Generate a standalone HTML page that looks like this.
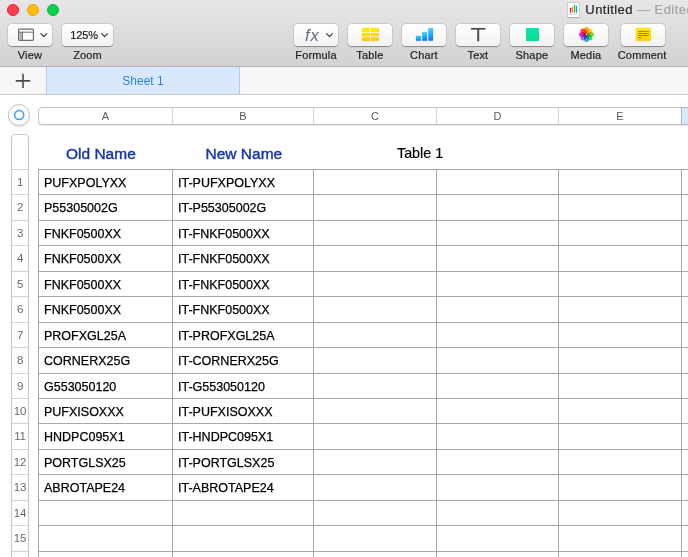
<!DOCTYPE html><html><head><meta charset="utf-8"><title>Untitled</title><style>
*{box-sizing:border-box;margin:0;padding:0}
html,body{width:688px;height:557px;overflow:hidden;background:#fff;font-family:"Liberation Sans",sans-serif;}
#root{position:relative;width:688px;height:557px;overflow:hidden;background:#fff}
.abs{position:absolute}
#toolbar{left:0;top:0;width:688px;height:67px;background:linear-gradient(#e8e6e8,#d3d1d3);border-bottom:1px solid #b3b1b3}
.tl{position:absolute;top:4px;width:12px;height:12px;border-radius:50%}
.btn{position:absolute;top:23.5px;height:22.5px;border-radius:4px;background:linear-gradient(#ffffff,#f3f2f3);box-shadow:0 0.5px 1px rgba(0,0,0,.35),0 0 0 0.5px rgba(0,0,0,.12)}
.lbl{position:absolute;top:47.7px;width:80px;text-align:center;font-size:11px;line-height:14px;color:#1e1e1e;letter-spacing:0.15px;-webkit-text-stroke:0.2px #1e1e1e}
#tabbar{left:0;top:67px;width:688px;height:28px;background:#f6f6f6;border-bottom:1px solid #c9c9c9}
#tab{left:46px;top:67px;width:194px;height:27px;background:#d8e8fd;border-left:1px solid #b6c9e6;border-right:1px solid #b6c9e6;color:#2f7fe6;font-size:12px;line-height:27px;padding-top:1px;text-align:center}
.colhdr{top:107px;height:18px;left:38px;width:660px;border:1px solid #c4c4c4;border-radius:4px;background:#fff;box-shadow:0 1px 1px rgba(0,0,0,.10)}
.cl{position:absolute;top:107px;height:18px;line-height:18px;font-size:11px;color:#5a5a5a;text-align:center;padding-left:1px}
.cs{position:absolute;top:108px;height:16px;width:1px;background:#d4d4d4}
.rowhdr{left:11px;top:134px;width:18px;height:440px;border:1px solid #c6c6c6;border-radius:4px;background:#fff}
.rn{position:absolute;left:12px;width:16px;text-align:center;font-size:11.5px;color:#6a6a6a;line-height:14px;letter-spacing:-0.2px}
.rs{position:absolute;left:12px;width:16px;height:1px;background:#d2d2d2}
.hl{position:absolute;left:38px;width:650px;height:1px;background:#a6a6a6}
.vl{position:absolute;top:169px;width:1px;height:400px;background:#a6a6a6}
.ct{position:absolute;font-size:12.5px;line-height:16px;color:#000;white-space:nowrap;-webkit-text-stroke:0.25px #000}
.hd{position:absolute;font-size:15.5px;color:#1434ac;-webkit-text-stroke:0.4px #1434ac;letter-spacing:0px;white-space:nowrap;line-height:18px}
.ico{position:absolute;overflow:visible}
</style></head><body><div id="root"><div id="lay" style="position:absolute;left:0;top:0;width:688px;height:557px;will-change:transform">
<div id="toolbar" class="abs"></div>
<div class="tl" style="left:7px;background:#ff3f4e;border:0.5px solid #f01c30"></div>
<div class="tl" style="left:27px;background:#ffbe0c;border:0.5px solid #e9a204"></div>
<div class="tl" style="left:47px;background:#04d04c;border:0.5px solid #12b93a"></div>
<div class="btn" style="left:7.75px;width:44.25px"></div>
<div class="lbl" style="left:-10.125px">View</div>
<div class="btn" style="left:61.9px;width:51.2px"></div>
<div class="lbl" style="left:47.5px">Zoom</div>
<div class="btn" style="left:293.9px;width:44.3px"></div>
<div class="lbl" style="left:276.04999999999995px">Formula</div>
<div class="btn" style="left:347.75px;width:44.3px"></div>
<div class="lbl" style="left:329.9px">Table</div>
<div class="btn" style="left:401.75px;width:44.3px"></div>
<div class="lbl" style="left:383.9px">Chart</div>
<div class="btn" style="left:455.75px;width:44.3px"></div>
<div class="lbl" style="left:437.9px">Text</div>
<div class="btn" style="left:509.75px;width:44.3px"></div>
<div class="lbl" style="left:491.9px">Shape</div>
<div class="btn" style="left:563.75px;width:44.3px"></div>
<div class="lbl" style="left:545.9px">Media</div>
<div class="btn" style="left:621px;width:44.3px"></div>
<div class="lbl" style="left:602.15px">Comment</div>
<svg class="ico" style="left:18px;top:28px" width="18" height="15" viewBox="0 0 18 15"><g transform="translate(0.000 0.500) scale(1.0000 1.0000)"><rect x="0.6" y="0.6" width="14.8" height="11.3" rx="0.8" fill="#fdfdfd" stroke="#6e6e6e" stroke-width="1.2"/><rect x="1.2" y="4" width="3" height="7.6" fill="#b4b4b4"/><path d="M0.6 3.7H15.4M4.4 3.7V11.8" stroke="#6e6e6e" stroke-width="1" fill="none"/></g></svg>
<svg class="ico" style="left:40px;top:33px" width="9" height="6" viewBox="0 0 9 6"><g transform="translate(0.300 0.200) scale(1.0000 1.0000)"><path d="M0.5 0.4L3.5 3.3L6.5 0.4" stroke="#444" stroke-width="1.2" fill="none" stroke-linecap="round" stroke-linejoin="round"/></g></svg>
<div class="abs" style="left:70.3px;top:27.5px;font-size:11px;line-height:14px;color:#1e1e1e;letter-spacing:-0.1px;-webkit-text-stroke:0.2px #1e1e1e;white-space:nowrap">125%</div>
<svg class="ico" style="left:101px;top:33px" width="9" height="6" viewBox="0 0 9 6"><g transform="translate(0.000 0.200) scale(1.0000 1.0000)"><path d="M0.5 0.4L3.5 3.3L6.5 0.4" stroke="#444" stroke-width="1.2" fill="none" stroke-linecap="round" stroke-linejoin="round"/></g></svg>
<div class="abs" style="left:305px;top:26px;font-size:16.5px;line-height:18px;color:#5d6c82;font-style:italic;white-space:nowrap;letter-spacing:1px;font-family:'Liberation Sans',sans-serif">fx</div>
<svg class="ico" style="left:326px;top:33px" width="9" height="6" viewBox="0 0 9 6"><g transform="translate(0.000 0.200) scale(1.0000 1.0000)"><path d="M0.5 0.4L3.5 3.3L6.5 0.4" stroke="#444" stroke-width="1.2" fill="none" stroke-linecap="round" stroke-linejoin="round"/></g></svg>
<svg class="ico" style="left:362px;top:28px" width="19" height="15" viewBox="0 0 19 15"><g transform="translate(0.000 0.000) scale(1.0000 1.0000)"><defs><linearGradient id="gy" x1="0" y1="0" x2="0" y2="1"><stop offset="0" stop-color="#fff200"/><stop offset="1" stop-color="#fbc800"/></linearGradient></defs><rect x="0.25" y="0.25" width="16.5" height="12.5" rx="0.9" fill="url(#gy)" stroke="#efbc00" stroke-width="0.5"/><path d="M8.5 0V13M0 4.4H17M0 8.7H17" stroke="#fffbd0" stroke-width="0.9" fill="none"/></g></svg>
<svg class="ico" style="left:416px;top:28px" width="19" height="15" viewBox="0 0 19 15"><g transform="translate(0.000 0.000) scale(1.0000 1.0000)"><defs><linearGradient id="gb" x1="0" y1="0" x2="0" y2="1"><stop offset="0" stop-color="#36d4ff"/><stop offset="0.25" stop-color="#2cc4ff"/><stop offset="1" stop-color="#0878ee"/></linearGradient></defs><rect x="0" y="8" width="4.8" height="4.8" rx="0.6" fill="url(#gb)" stroke="#0a84ea" stroke-opacity="0.6" stroke-width="0.4"/><rect x="6.2" y="4.2" width="4.8" height="8.6" rx="0.6" fill="url(#gb)" stroke="#0a84ea" stroke-opacity="0.6" stroke-width="0.4"/><rect x="12.4" y="0.3" width="4.6" height="12.5" rx="0.6" fill="url(#gb)" stroke="#0a84ea" stroke-opacity="0.6" stroke-width="0.4"/></g></svg>
<svg class="ico" style="left:471px;top:28px" width="16" height="15" viewBox="0 0 16 15"><g transform="translate(0.000 0.000) scale(1.0000 1.0000)"><path d="M0 0.8H14.4" stroke="#4a4a4a" stroke-width="1.7" fill="none"/><path d="M7.2 0.8V13.2" stroke="#4a4a4a" stroke-width="2" fill="none"/></g></svg>
<svg class="ico" style="left:526px;top:28px" width="15" height="15" viewBox="0 0 15 15"><g transform="translate(0.000 0.000) scale(1.0000 1.0000)"><defs><linearGradient id="gg" x1="0" y1="0" x2="0" y2="1"><stop offset="0" stop-color="#0be2b4"/><stop offset="1" stop-color="#10dc8a"/></linearGradient></defs><rect width="13" height="13" rx="0.6" fill="url(#gg)"/></g></svg>
<svg class="ico" style="left:578px;top:26px;isolation:isolate" width="18" height="18" viewBox="0 0 18 18"><g transform="translate(8.450 8.500) scale(1.0000 1.0000)"><ellipse cx="0" cy="-4.0" rx="2.5" ry="3.6" fill="#ff8c00" fill-opacity="0.9" style="mix-blend-mode:multiply" transform="rotate(0)"/><ellipse cx="0" cy="-4.0" rx="2.5" ry="3.6" fill="#ffd600" fill-opacity="0.9" style="mix-blend-mode:multiply" transform="rotate(45)"/><ellipse cx="0" cy="-4.0" rx="2.5" ry="3.6" fill="#7fd100" fill-opacity="0.9" style="mix-blend-mode:multiply" transform="rotate(90)"/><ellipse cx="0" cy="-4.0" rx="2.5" ry="3.6" fill="#14d890" fill-opacity="0.9" style="mix-blend-mode:multiply" transform="rotate(135)"/><ellipse cx="0" cy="-4.0" rx="2.5" ry="3.6" fill="#1e9ae0" fill-opacity="0.9" style="mix-blend-mode:multiply" transform="rotate(180)"/><ellipse cx="0" cy="-4.0" rx="2.5" ry="3.6" fill="#a95cf0" fill-opacity="0.9" style="mix-blend-mode:multiply" transform="rotate(225)"/><ellipse cx="0" cy="-4.0" rx="2.5" ry="3.6" fill="#dc1cd6" fill-opacity="0.9" style="mix-blend-mode:multiply" transform="rotate(270)"/><ellipse cx="0" cy="-4.0" rx="2.5" ry="3.6" fill="#ff2c3c" fill-opacity="0.9" style="mix-blend-mode:multiply" transform="rotate(315)"/><circle r="0.5" fill="#fff"/></g></svg>
<svg class="ico" style="left:635px;top:27px" width="17" height="15" viewBox="0 0 17 15"><g transform="translate(0.900 0.900) scale(1.0000 1.0000)"><defs><linearGradient id="gc" x1="0" y1="0" x2="0" y2="1"><stop offset="0" stop-color="#fff000"/><stop offset="1" stop-color="#ffcc00"/></linearGradient></defs><rect x="0.25" y="0.25" width="14.5" height="12.6" rx="0.8" fill="url(#gc)" stroke="#f3c400" stroke-width="0.5"/><path d="M2.2 3.5H13M2.2 5.6H13M2.2 7.6H13M2.2 9.6H5" stroke="#9c6c00" stroke-width="0.85" fill="none"/></g></svg>
<svg class="ico" style="left:567px;top:2px" width="15" height="18" viewBox="0 0 15 18"><g transform="translate(0.000 0.000) scale(1.0000 1.0000)"><rect x="0.5" y="0.5" width="12" height="15" fill="#fff" stroke="#c6c4c6" stroke-width="0.8"/><path d="M0.5 15.6H12.5" stroke="#a2a0a2" stroke-width="0.8"/><path d="M3.5 6.3V10.3" stroke="#f0143c" stroke-width="1.3" stroke-linecap="round"/><path d="M5.5 5.5V10.3" stroke="#ff8a10" stroke-width="1.3" stroke-linecap="round"/><path d="M7.5 3.5V10.3" stroke="#14d040" stroke-width="1.3" stroke-linecap="round"/><path d="M9.5 4.5V10.3" stroke="#149aff" stroke-width="1.3" stroke-linecap="round"/><path d="M2.2 12.5H10.8" stroke="#dadada" stroke-width="1"/></g></svg>
<div class="abs" style="left:585.3px;top:2.4px;font-size:13px;line-height:16px;color:#262626;white-space:nowrap;letter-spacing:0.45px;-webkit-text-stroke:0.2px">Untitled <span style="color:#a3a3a3">— Edited</span></div>
<div id="tabbar" class="abs"></div>
<div id="tab" class="abs">Sheet 1</div>
<svg class="ico" style="left:15px;top:73px" width="17" height="17" viewBox="0 0 17 17"><g transform="translate(0.800 0.700) scale(1.0000 1.0000)"><path d="M7.2 0v14.4M0 7.2h14.4" stroke="#4a4a4a" stroke-width="1.6" fill="none"/></g></svg>
<div class="abs" style="left:8.2px;top:104px;width:22px;height:22px;border-radius:50%;border:1px solid #c2c2c2;background:#fff;box-shadow:0 1px 1px rgba(0,0,0,.1)"></div>
<svg class="ico" style="left:13px;top:109px" width="14" height="14" viewBox="0 0 14 14"><g transform="translate(6.200 6.000) scale(1.0000 1.0000)"><circle r="4.55" fill="none" stroke="#3a9cf7" stroke-width="1.5"/></g></svg>
<div class="colhdr abs"></div>
<div class="cl" style="left:38px;width:134px">A</div>
<div class="cl" style="left:172px;width:141px">B</div>
<div class="cl" style="left:313px;width:123px">C</div>
<div class="cl" style="left:436px;width:122px">D</div>
<div class="cl" style="left:558px;width:123px">E</div>
<div class="cs" style="left:172px"></div>
<div class="cs" style="left:313px"></div>
<div class="cs" style="left:436px"></div>
<div class="cs" style="left:558px"></div>
<div class="abs" style="left:681px;top:107px;width:10px;height:18px;background:#dbe9fc;border:1px solid #9fb9de"></div>
<div class="rowhdr abs"></div>
<div class="hl" style="top:169px"></div>
<div class="rs" style="top:169px"></div>
<div class="rn" style="top:174.90px">1</div>
<div class="ct" style="left:44px;top:174.90px">PUFXPOLYXX</div>
<div class="ct" style="left:178px;top:174.90px">IT-PUFXPOLYXX</div>
<div class="hl" style="top:194px"></div>
<div class="rs" style="top:194px"></div>
<div class="rn" style="top:200.35px">2</div>
<div class="ct" style="left:44px;top:200.35px">P55305002G</div>
<div class="ct" style="left:178px;top:200.35px">IT-P55305002G</div>
<div class="hl" style="top:220px"></div>
<div class="rs" style="top:220px"></div>
<div class="rn" style="top:225.80px">3</div>
<div class="ct" style="left:44px;top:225.80px">FNKF0500XX</div>
<div class="ct" style="left:178px;top:225.80px">IT-FNKF0500XX</div>
<div class="hl" style="top:245px"></div>
<div class="rs" style="top:245px"></div>
<div class="rn" style="top:251.25px">4</div>
<div class="ct" style="left:44px;top:251.25px">FNKF0500XX</div>
<div class="ct" style="left:178px;top:251.25px">IT-FNKF0500XX</div>
<div class="hl" style="top:271px"></div>
<div class="rs" style="top:271px"></div>
<div class="rn" style="top:276.70px">5</div>
<div class="ct" style="left:44px;top:276.70px">FNKF0500XX</div>
<div class="ct" style="left:178px;top:276.70px">IT-FNKF0500XX</div>
<div class="hl" style="top:296px"></div>
<div class="rs" style="top:296px"></div>
<div class="rn" style="top:302.15px">6</div>
<div class="ct" style="left:44px;top:302.15px">FNKF0500XX</div>
<div class="ct" style="left:178px;top:302.15px">IT-FNKF0500XX</div>
<div class="hl" style="top:322px"></div>
<div class="rs" style="top:322px"></div>
<div class="rn" style="top:327.60px">7</div>
<div class="ct" style="left:44px;top:327.60px">PROFXGL25A</div>
<div class="ct" style="left:178px;top:327.60px">IT-PROFXGL25A</div>
<div class="hl" style="top:347px"></div>
<div class="rs" style="top:347px"></div>
<div class="rn" style="top:353.05px">8</div>
<div class="ct" style="left:44px;top:353.05px">CORNERX25G</div>
<div class="ct" style="left:178px;top:353.05px">IT-CORNERX25G</div>
<div class="hl" style="top:373px"></div>
<div class="rs" style="top:373px"></div>
<div class="rn" style="top:378.50px">9</div>
<div class="ct" style="left:44px;top:378.50px">G553050120</div>
<div class="ct" style="left:178px;top:378.50px">IT-G553050120</div>
<div class="hl" style="top:398px"></div>
<div class="rs" style="top:398px"></div>
<div class="rn" style="top:403.95px">10</div>
<div class="ct" style="left:44px;top:403.95px">PUFXISOXXX</div>
<div class="ct" style="left:178px;top:403.95px">IT-PUFXISOXXX</div>
<div class="hl" style="top:423px"></div>
<div class="rs" style="top:423px"></div>
<div class="rn" style="top:429.40px">11</div>
<div class="ct" style="left:44px;top:429.40px">HNDPC095X1</div>
<div class="ct" style="left:178px;top:429.40px">IT-HNDPC095X1</div>
<div class="hl" style="top:449px"></div>
<div class="rs" style="top:449px"></div>
<div class="rn" style="top:454.85px">12</div>
<div class="ct" style="left:44px;top:454.85px">PORTGLSX25</div>
<div class="ct" style="left:178px;top:454.85px">IT-PORTGLSX25</div>
<div class="hl" style="top:474px"></div>
<div class="rs" style="top:474px"></div>
<div class="rn" style="top:480.30px">13</div>
<div class="ct" style="left:44px;top:480.30px">ABROTAPE24</div>
<div class="ct" style="left:178px;top:480.30px">IT-ABROTAPE24</div>
<div class="hl" style="top:500px"></div>
<div class="rs" style="top:500px"></div>
<div class="rn" style="top:505.75px">14</div>
<div class="hl" style="top:525px"></div>
<div class="rs" style="top:525px"></div>
<div class="rn" style="top:531.20px">15</div>
<div class="hl" style="top:551px"></div>
<div class="rs" style="top:551px"></div>
<div class="rn" style="top:556.65px">16</div>
<div class="hl" style="top:576px"></div>
<div class="rs" style="top:576px"></div>
<div class="rn" style="top:582.10px">17</div>
<div class="vl" style="left:38px"></div>
<div class="vl" style="left:172px"></div>
<div class="vl" style="left:313px"></div>
<div class="vl" style="left:436px"></div>
<div class="vl" style="left:558px"></div>
<div class="vl" style="left:681px"></div>
<div class="hd" style="left:66px;top:144.8px">Old Name</div>
<div class="hd" style="left:205.5px;top:144.8px">New Name</div>
<div class="abs" style="left:397px;top:144.3px;font-size:14.3px;line-height:18px;color:#000;white-space:nowrap;-webkit-text-stroke:0.2px #000">Table 1</div>
</div></div></body></html>
